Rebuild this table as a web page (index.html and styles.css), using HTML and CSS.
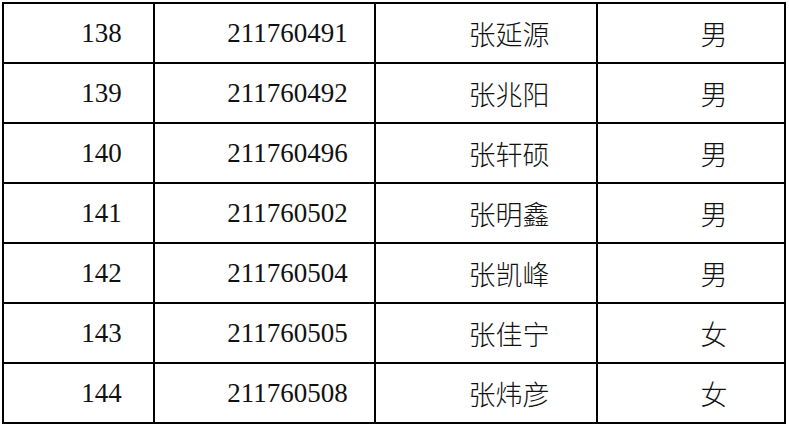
FILE: index.html
```html
<!DOCTYPE html>
<html lang="zh-CN">
<head>
<meta charset="utf-8">
<title>名单</title>
<link rel="stylesheet" href="styles.css">
</head>
<body>
<div class="sheet">
  <div class="cell num">138</div><div class="cell num">211760491</div><div class="cell cjk">张延源</div><div class="cell cjk">男</div>
  <div class="cell num">139</div><div class="cell num">211760492</div><div class="cell cjk">张兆阳</div><div class="cell cjk">男</div>
  <div class="cell num">140</div><div class="cell num">211760496</div><div class="cell cjk">张轩硕</div><div class="cell cjk">男</div>
  <div class="cell num">141</div><div class="cell num">211760502</div><div class="cell cjk">张明鑫</div><div class="cell cjk">男</div>
  <div class="cell num">142</div><div class="cell num">211760504</div><div class="cell cjk">张凯峰</div><div class="cell cjk">男</div>
  <div class="cell num">143</div><div class="cell num">211760505</div><div class="cell cjk">张佳宁</div><div class="cell cjk">女</div>
  <div class="cell num">144</div><div class="cell num">211760508</div><div class="cell cjk">张炜彦</div><div class="cell cjk">女</div>
</div>
</body>
</html>
```
FILE: styles.css
```css
html, body {
  margin: 0;
  padding: 0;
  background: #fff;
}

.sheet {
  display: grid;
  grid-template-columns: 151px 221px 222px 188px;
  grid-auto-rows: 60px;
  width: max-content;
  margin: 2px 0 0 2px;
  border-top: 2px solid #000;
  border-left: 2px solid #000;
}

.cell {
  box-sizing: border-box;
  border-right: 2px solid #000;
  border-bottom: 2px solid #000;
  display: flex;
  align-items: center;
  justify-content: center;
  padding-left: 46px;
  color: #111;
  white-space: nowrap;
}

.num {
  font-family: "Liberation Serif", "Times New Roman", serif;
  font-size: 27px;
}

.cjk {
  font-family: "Noto Sans CJK SC", "Noto Sans", sans-serif;
  font-weight: 300;
  font-size: 27px;
}
```
